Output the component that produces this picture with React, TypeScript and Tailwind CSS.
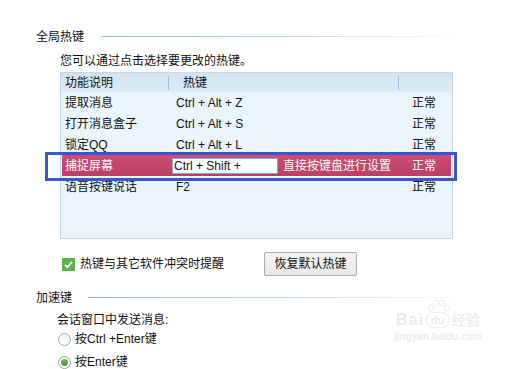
const hotkeys = [
  { name: '提取消息', key: 'Ctrl + Alt + Z', status: '正常' },
  { name: '打开消息盒子', key: 'Ctrl + Alt + S', status: '正常' },
  { name: '锁定QQ', key: 'Ctrl + Alt + L', status: '正常' },
  { name: '捕捉屏幕', key: 'Ctrl + Shift + ', status: '正常', editing: true },
  { name: '语音按键说话', key: 'F2', status: '正常' },
];

export default function App() {
  return (
    <div className="relative h-[369px] w-[517px] overflow-hidden bg-white font-['Liberation_Sans','Noto_Sans_CJK_SC',sans-serif] text-[12px] leading-[16px] text-[#111]">
      <div className="pt-[29px]">
        <SectionTitle title="全局热键" gap="ml-[17px]" />
        <p className="mt-[8px] pl-[60px]">您可以通过点击选择要更改的热键。</p>

        <div className="mt-[3px] ml-[60px] h-[167px] w-[393px] border border-[#c3d9e9] bg-[#eaf5fb]">
          <div className="flex h-[19px] items-center bg-gradient-to-b from-[#d2e4f1] to-[#dcebf5]">
            <div className="w-[107px] pl-[4px]">功能说明</div>
            <div className="h-[14px] w-px bg-[#9fbdd4]" />
            <div className="w-[229px] pl-[14px]">热键</div>
            <div className="h-[14px] w-px bg-[#9fbdd4]" />
          </div>
          {hotkeys.map((row) => (
            <div
              key={row.name}
              className={
                row.editing
                  ? 'ml-px mr-px flex h-[21px] items-center bg-gradient-to-b from-[#cd4d75] to-[#bb3f64] text-white'
                  : 'flex h-[21px] items-center'
              }
            >
              <div className={row.editing ? 'w-[106px] pl-[3px]' : 'w-[107px] pl-[4px]'}>{row.name}</div>
              <div className="w-[110px]">
                {row.editing ? (
                  <div className="ml-[4px] flex h-[16px] w-[106px] items-center border border-[#7eaad4] bg-white pl-px text-[#111]">
                    {row.key}
                  </div>
                ) : (
                  <span className="pl-[8px]">{row.key}</span>
                )}
              </div>
              <div className="w-[120px] pl-[5px]">{row.editing ? '直接按键盘进行设置' : ''}</div>
              <div className="pl-[14px]">{row.status}</div>
            </div>
          ))}
        </div>

        <div className="mt-[13px] flex h-[24px] items-center">
          <div className="flex w-[264px] items-center pl-[62px]">
            <span className="flex h-[13px] w-[13px] items-center justify-center rounded-[1px] bg-[#5cb24a]">
              <svg width="11" height="11" viewBox="0 0 11 11">
                <path d="M2 5.8 L4.4 8.2 L9 2.8" fill="none" stroke="white" strokeWidth="1.8" />
              </svg>
            </span>
            <span className="ml-[5px]">热键与其它软件冲突时提醒</span>
          </div>
          <button className="h-[24px] w-[93px] rounded-[2px] border border-[#adadad] bg-gradient-to-b from-[#f4f4f4] to-[#e8e8e8] text-[12px] text-[#111]">
            恢复默认热键
          </button>
        </div>

        <div className="mt-[14px]">
          <SectionTitle title="加速键" gap="ml-[16px]" />
        </div>
        <p className="mt-[6px] pl-[57px]">会话窗口中发送消息:</p>
        <Radio label="按Ctrl +Enter键" className="mt-[3px]" />
        <Radio label="按Enter键" checked className="mt-[7px]" />
      </div>

      <div className="absolute left-[45px] top-[152px] h-[29px] w-[412px] border-[3px] border-[#3b56c8]" />

      <div className="absolute left-[394px] top-[312px] flex flex-col items-center text-[#ececec]">
        <div className="flex items-end">
          <span className="text-[16px] font-bold leading-[16px] tracking-[1px]">Bai</span>
          <span className="relative mx-[2px] flex h-[16px] w-[24px] items-center justify-center rounded-[8px] border border-[#ececec] text-[11px] font-bold leading-[12px]">
            du
            <svg className="absolute -top-[14px] left-[0px]" width="24" height="14" viewBox="0 0 24 14">
              <g fill="none" stroke="#ececec" strokeWidth="1">
                <ellipse cx="4" cy="9" rx="2.5" ry="3" />
                <ellipse cx="9" cy="4" rx="2.5" ry="3" />
                <ellipse cx="15" cy="4" rx="2.5" ry="3" />
                <ellipse cx="20" cy="9" rx="2.5" ry="3" />
              </g>
            </svg>
          </span>
          <span className="text-[14px] font-bold leading-[16px]">经验</span>
        </div>
        <span className="mt-[3px] text-[10px] font-bold leading-[12px]">jingyan.baidu.com</span>
      </div>
    </div>
  );
}

function SectionTitle({ title, gap }: { title: string; gap: string }) {
  return (
    <div className="flex h-[16px] items-center pl-[36px] pr-[50px]">
      <span>{title}</span>
      <div className={`${gap} mb-[2px] h-px flex-1 bg-gradient-to-r from-[#97b7d2] via-[#c2d7e8] to-white`} />
    </div>
  );
}

function Radio({ label, checked, className }: { label: string; checked?: boolean; className: string }) {
  return (
    <div className={`${className} flex h-[16px] items-center pl-[58px]`}>
      <span className="flex h-[13px] w-[13px] items-center justify-center rounded-full border border-[#a6a6a6] bg-gradient-to-b from-[#f2f2f2] to-white">
        {checked && <span className="h-[7px] w-[7px] rounded-full bg-gradient-to-b from-[#6cc052] to-[#3f9a2e]" />}
      </span>
      <span className="ml-[4px]">{label}</span>
    </div>
  );
}
